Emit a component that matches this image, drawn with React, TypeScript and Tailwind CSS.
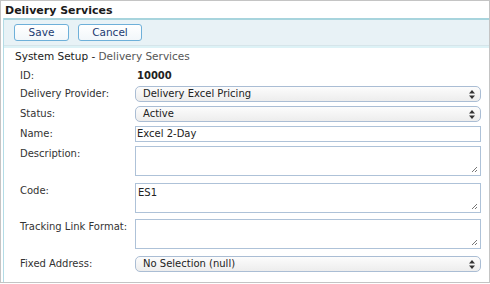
import React from "react";

const font = { fontFamily: '"DejaVu Sans", Verdana, sans-serif' };

function Arrows() {
  return (
    <svg width="6" height="9" viewBox="0 0 6 9" className="shrink-0">
      <path d="M3 0 L6 3.5 L0 3.5 Z" fill="#333" />
      <path d="M3 9 L6 5.5 L0 5.5 Z" fill="#333" />
    </svg>
  );
}

function Select({ value }: { value: string }) {
  return (
    <div className="h-[16px] w-full rounded-[5px] border border-[#aabdd4] bg-gradient-to-b from-[#fcfcfc] to-[#ededed] flex items-center justify-between pl-[7px] pr-[5px] text-[10px] leading-none text-[#222]">
      <span>{value}</span>
      <Arrows />
    </div>
  );
}

function Grip() {
  return (
    <svg width="7" height="7" viewBox="0 0 7 7" className="absolute right-[2px] bottom-[2px]">
      <path d="M1 6 L6 1 M4 6 L6 4" stroke="#666" strokeWidth="0.9" />
    </svg>
  );
}

function TextArea({ value }: { value?: string }) {
  return (
    <div className="relative h-[30px] w-full border border-[#aec2d8] bg-white pl-[2px] pt-[2px] text-[10px] leading-[13px] text-[#222]">
      {value}
      <Grip />
    </div>
  );
}

function Row({
  label,
  children,
  mt,
  h,
}: {
  label: string;
  children: React.ReactNode;
  mt: string;
  h: string;
}) {
  return (
    <div className={`flex ${mt} ${h}`}>
      <div className="w-[115px] shrink-0 pt-[1px] text-[10px] leading-[14px] text-[#333]">{label}</div>
      <div className="w-[346px] shrink-0 text-[10px] leading-[14px]">{children}</div>
    </div>
  );
}

export default function App() {
  return (
    <div className="w-[490px] h-[284px] bg-white" style={font}>
      <div className="w-[490px] h-[283px] border border-[#c4c4c4] flex flex-col">
        <div className="h-[17px] pl-[4px] pt-[3px] text-[11px] leading-[13px] font-bold text-[#1a1a1a]">
          Delivery Services
        </div>
        <div className="ml-[2px] flex-1 border-l border-[#b3dce6] flex flex-col">
          <div className="border-t-2 border-[#a7d4dd] bg-[#e8f2f6]">
            <div className="h-[25px] flex items-start gap-[9px] pl-[10px] pt-[4px]">
              <button className="h-[17px] w-[55px] rounded-[3px] border border-[#6eb0d9] bg-gradient-to-b from-white to-[#f2f7fa] text-[10.5px] leading-none text-[#1c3b72]">
                Save
              </button>
              <button className="h-[17px] w-[64px] rounded-[3px] border border-[#6eb0d9] bg-gradient-to-b from-white to-[#f2f7fa] text-[10.5px] leading-none text-[#1c3b72]">
                Cancel
              </button>
            </div>
            <div className="h-[1px] bg-[#d6e5ea]" />
            <div className="h-[2px] bg-[#ddf2f6]" />
          </div>
          <div className="pl-[11px] pt-[1px] h-[20px] text-[10.5px] leading-[14px]">
            <span className="text-[#1a1a1a]">System Setup - </span>
            <span className="text-[#555]">Delivery Services</span>
          </div>
          <div className="pl-[16px] flex flex-col">
            <Row label="ID:" mt="mt-0" h="h-[15px]">
              <div className="pl-[2px] pt-[1px] font-bold text-[#222]">10000</div>
            </Row>
            <Row label="Delivery Provider:" mt="mt-[3px]" h="h-[16px]">
              <Select value="Delivery Excel Pricing" />
            </Row>
            <Row label="Status:" mt="mt-[4px]" h="h-[16px]">
              <Select value="Active" />
            </Row>
            <Row label="Name:" mt="mt-[4px]" h="h-[16px]">
              <div className="h-[16px] w-full border border-[#aec2d8] bg-white pl-[1px] text-[10px] leading-[14px] text-[#222]">
                Excel 2-Day
              </div>
            </Row>
            <Row label="Description:" mt="mt-[4px]" h="h-[30px]">
              <TextArea />
            </Row>
            <Row label="Code:" mt="mt-[7px]" h="h-[30px]">
              <TextArea value="ES1" />
            </Row>
            <Row label="Tracking Link Format:" mt="mt-[6px]" h="h-[30px]">
              <TextArea />
            </Row>
            <Row label="Fixed Address:" mt="mt-[7px]" h="h-[16px]">
              <Select value="No Selection (null)" />
            </Row>
          </div>
        </div>
      </div>
    </div>
  );
}
